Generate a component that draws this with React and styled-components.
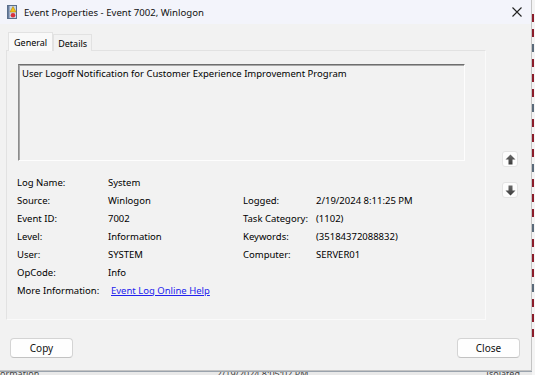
import React from "react";
import styled, { createGlobalStyle } from "styled-components";

const FONT = `"Noto Sans", "Open Sans", sans-serif`;

const Global = createGlobalStyle`
  html, body { margin: 0; padding: 0; }
  body { background: #d8d8d8; font-family: ${FONT}; }
  #root { width: 535px; height: 375px; overflow: hidden; }
`;

const Desktop = styled.div`
  width: 535px;
  height: 375px;
  display: grid;
  grid-template-columns: 532px 3px;
  grid-template-rows: 371px 4px;
  background: #efefef;
`;

const Window = styled.div`
  grid-column: 1;
  grid-row: 1;
  display: flex;
  flex-direction: column;
  background: #f2f2f2;
  border-right: 1px solid #c4c4c4;
  border-bottom: 1px solid #c4c4c4;
  box-sizing: border-box;
  font-size: 9.5px;
  color: #000;
`;

const TitleBar = styled.div`
  height: 24px;
  flex: none;
  display: flex;
  align-items: center;
  padding: 0 0 0 7px;
  gap: 7px;
  background: #f3f4fb;
  font-size: 9.6px;
  color: #111;
`;

const TitleText = styled.span`
  flex: 1;
`;

const CloseGlyph = styled.div`
  width: 28px;
  height: 24px;
  display: flex;
  align-items: center;
  justify-content: center;
`;

const Body = styled.div`
  flex: 1;
  display: flex;
  flex-direction: column;
  padding: 7px 0 0 0;
`;

const Upper = styled.div`
  display: flex;
  align-items: flex-start;
`;

const TabArea = styled.div`
  width: 480px;
  margin-left: 6px;
  display: flex;
  flex-direction: column;
`;

const TabStrip = styled.div`
  display: flex;
  align-items: flex-end;
  height: 19px;
  padding-left: 2px;
`;

const Tab = styled.div`
  box-sizing: border-box;
  height: ${(p) => (p.$active ? "19px" : "17px")};
  padding: 0 ${(p) => (p.$active ? "5px" : "4px")};
  display: flex;
  align-items: center;
  background: ${(p) => (p.$active ? "#f9f9f9" : "#f2f2f2")};
  border: 1px solid #e2e2e2;
  border-bottom: none;
  font-size: 9px;
  position: relative;
  top: 1px;
  z-index: ${(p) => (p.$active ? 2 : 1)};
`;

const Panel = styled.div`
  box-sizing: border-box;
  height: 270px;
  border: 1px solid #e2e2e2;
  border-bottom-color: #fafafa;
  border-right-color: #fafafa;
  padding: 13px 20px 0 11px;
  display: flex;
  flex-direction: column;
`;

const Description = styled.div`
  box-sizing: border-box;
  height: 97px;
  border: 1px solid;
  border-color: #6e6e6e #fdfdfd #fdfdfd #8c8c8c;
  box-shadow: inset 1px 1px 0 #a8a8a8;
  background: #f2f2f2;
  padding: 2px 3px;
  line-height: 13px;
`;

const Grid = styled.div`
  margin-top: 12px;
  display: grid;
  grid-template-columns: 91px 135px 73px 1fr;
  grid-auto-rows: 18px;
  align-items: center;
  margin-left: -1px;
`;

const Cell = styled.div`
  grid-column: ${(p) => p.$col};
  grid-row: ${(p) => p.$row};
  white-space: nowrap;
`;

const Link = styled.a`
  color: #2222ee;
  text-decoration: underline;
  margin-left: 3px;
  cursor: pointer;
`;

const ArrowCol = styled.div`
  display: flex;
  flex-direction: column;
  gap: 15px;
  margin-left: 16px;
  margin-top: 120px;
`;

const ArrowBtn = styled.div`
  width: 16px;
  height: 16px;
  box-sizing: border-box;
  background: #fdfdfd;
  border: 1px solid #e4e4e4;
  border-radius: 3px;
  display: flex;
  align-items: center;
  justify-content: center;
`;

const Footer = styled.div`
  display: flex;
  justify-content: space-between;
  padding: 18px 11px 0 10px;
`;

const Button = styled.button`
  width: 63px;
  height: 20px;
  box-sizing: border-box;
  background: #fefefe;
  border: 1px solid #d4d4d4;
  border-bottom-color: #c2c2c2;
  border-radius: 4px;
  font-family: ${FONT};
  font-size: 10px;
  color: #111;
  padding: 0;
`;

const RightEdge = styled.div`
  grid-column: 2;
  grid-row: 1 / span 2;
  background: #f4f4f4;
  display: flex;
  flex-direction: column;
  gap: 7px;
  padding-top: 14px;
`;

const EdgeMark = styled.div`
  height: 8px;
  width: 2px;
  background: ${(p) => p.$c};
`;

const BottomStrip = styled.div`
  grid-column: 1;
  grid-row: 2;
  background: #e9e9e9;
  border-top: 1px solid #9aa3ad;
  display: flex;
  justify-content: space-between;
  align-items: flex-start;
  font-size: 9px;
  line-height: 3px;
  color: #444;
  overflow: hidden;
  padding: 0 12px 0 0;
`;

const StripText = styled.span`
  white-space: nowrap;
`;

const EventIcon = () => (
  <svg width="10" height="14" viewBox="0 0 10 14">
    <rect x="0.5" y="0.5" width="9" height="13" fill="#c9d6e8" stroke="#5a6f8c" />
    <rect x="1" y="1" width="1.5" height="12" fill="#6b7fa0" />
    <polygon points="6,1.5 9,7 3,7" fill="#f2c21a" stroke="#b68a00" strokeWidth="0.6" />
    <circle cx="6" cy="10.2" r="2.3" fill="#d8323c" />
  </svg>
);

const CloseIcon = () => (
  <svg width="10" height="10" viewBox="0 0 10 10">
    <path d="M0.5 0.5 L9.5 9.5 M9.5 0.5 L0.5 9.5" stroke="#222" strokeWidth="1.1" />
  </svg>
);

const UpArrow = () => (
  <svg width="11" height="11" viewBox="0 0 11 11">
    <defs>
      <linearGradient id="ag" x1="0" y1="0" x2="0" y2="1">
        <stop offset="0" stopColor="#6a6a6a" />
        <stop offset="1" stopColor="#3c3c3c" />
      </linearGradient>
    </defs>
    <polygon points="5.5,0.5 10.5,5.5 7.5,5.5 7.5,10.5 3.5,10.5 3.5,5.5 0.5,5.5" fill="url(#ag)" />
  </svg>
);

const DownArrow = () => (
  <svg width="11" height="11" viewBox="0 0 11 11">
    <defs>
      <linearGradient id="ag2" x1="0" y1="0" x2="0" y2="1">
        <stop offset="0" stopColor="#6a6a6a" />
        <stop offset="1" stopColor="#3c3c3c" />
      </linearGradient>
    </defs>
    <polygon points="3.5,0.5 7.5,0.5 7.5,5.5 10.5,5.5 5.5,10.5 0.5,5.5 3.5,5.5" fill="url(#ag2)" />
  </svg>
);

const left = [
  ["Log Name:", "System"],
  ["Source:", "Winlogon"],
  ["Event ID:", "7002"],
  ["Level:", "Information"],
  ["User:", "SYSTEM"],
  ["OpCode:", "Info"],
];

const right = [
  ["Logged:", "2/19/2024 8:11:25 PM"],
  ["Task Category:", "(1102)"],
  ["Keywords:", "(35184372088832)"],
  ["Computer:", "SERVER01"],
];

const edgeColors = ["#8b1c2a", "#8b1c2a", "#5a6a7a", "#8b1c2a", "#8b1c2a", "#8b1c2a", "#5a6a7a", "#8b1c2a", "#8b1c2a", "#8b1c2a", "#5a6a7a", "#8b1c2a", "#8b1c2a", "#8b1c2a", "#5a6a7a", "#8b1c2a", "#8b1c2a", "#8b1c2a", "#5a6a7a", "#8b1c2a", "#8b1c2a", "#8b1c2a"];

export default function App() {
  return (
    <>
      <Global />
      <Desktop>
        <Window>
          <TitleBar>
            <EventIcon />
            <TitleText>Event Properties - Event 7002, Winlogon</TitleText>
            <CloseGlyph>
              <CloseIcon />
            </CloseGlyph>
          </TitleBar>
          <Body>
            <Upper>
              <TabArea>
                <TabStrip>
                  <Tab $active>General</Tab>
                  <Tab>Details</Tab>
                </TabStrip>
                <Panel>
                  <Description>
                    User Logoff Notification for Customer Experience Improvement Program
                  </Description>
                  <Grid>
                    {left.map(([k, v], i) => (
                      <React.Fragment key={k}>
                        <Cell $col={1} $row={i + 1}>{k}</Cell>
                        <Cell $col={2} $row={i + 1}>{v}</Cell>
                      </React.Fragment>
                    ))}
                    {right.map(([k, v], i) => (
                      <React.Fragment key={k}>
                        <Cell $col={3} $row={i + 2}>{k}</Cell>
                        <Cell $col={4} $row={i + 2}>{v}</Cell>
                      </React.Fragment>
                    ))}
                    <Cell $col={1} $row={7}>More Information:</Cell>
                    <Cell $col={2} $row={7}>
                      <Link>Event Log Online Help</Link>
                    </Cell>
                  </Grid>
                </Panel>
              </TabArea>
              <ArrowCol>
                <ArrowBtn>
                  <UpArrow />
                </ArrowBtn>
                <ArrowBtn>
                  <DownArrow />
                </ArrowBtn>
              </ArrowCol>
            </Upper>
            <Footer>
              <Button>Copy</Button>
              <Button>Close</Button>
            </Footer>
          </Body>
        </Window>
        <RightEdge>
          {edgeColors.map((c, i) => (
            <EdgeMark key={i} $c={c} />
          ))}
        </RightEdge>
        <BottomStrip>
          <StripText>ormation</StripText>
          <StripText>2/19/2024 8:05:02 PM</StripText>
          <StripText>Isolated</StripText>
        </BottomStrip>
      </Desktop>
    </>
  );
}
